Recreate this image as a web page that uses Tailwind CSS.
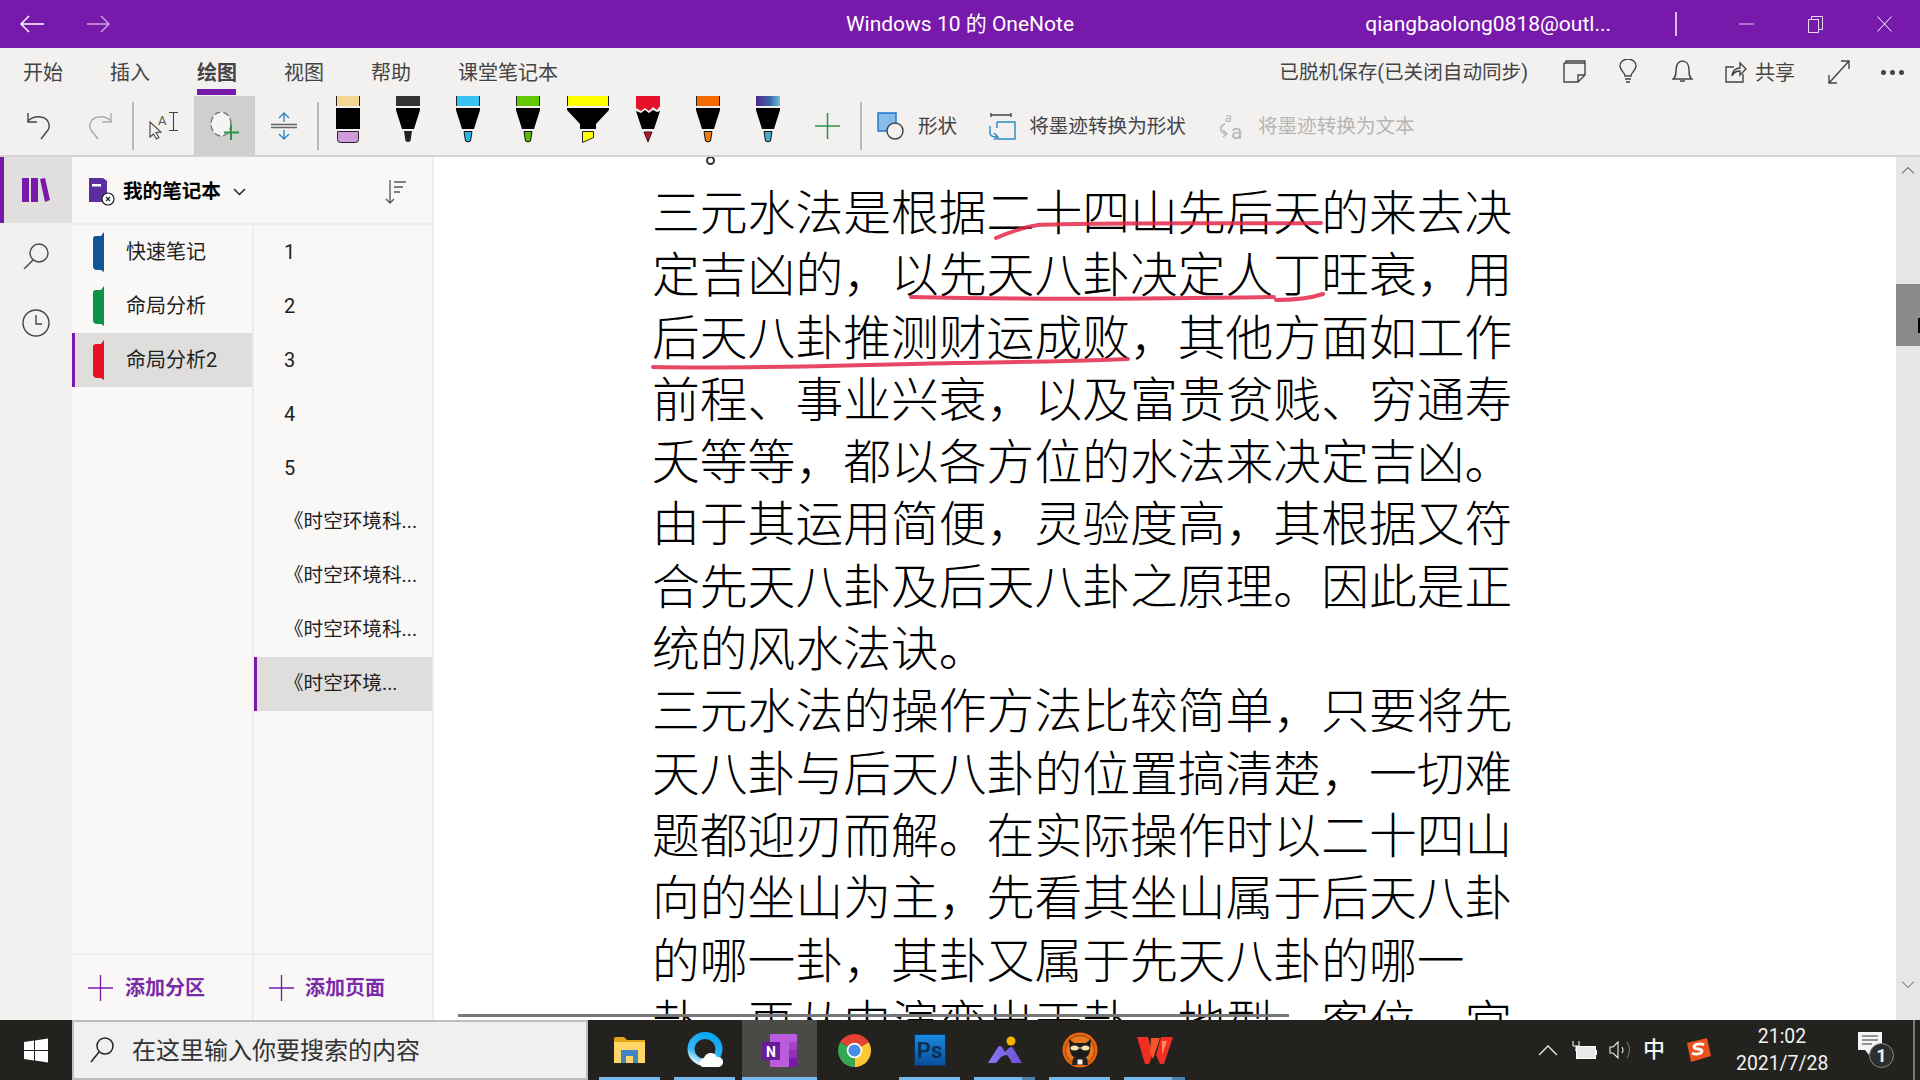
<!DOCTYPE html>
<html lang="zh-CN">
<head>
  <meta charset="UTF-8" />
  <title>Windows 10 的 OneNote</title>
  <script src="https://cdn.jsdelivr.net/npm/@tailwindcss/browser@4"></script>
</head>
<body class="w-[1920px] h-[1080px] overflow-hidden bg-white font-['Roboto','Noto_Sans_CJK_SC',sans-serif] flex flex-col">

  <!-- Title bar -->
  <header class="h-[48px] shrink-0 bg-[#7719aa] text-white grid grid-cols-[1fr_auto_1fr] items-center">
    <div class="flex items-center">
      <svg class="ml-[20px] w-[24px] h-[18px]" viewBox="0 0 24 18" fill="none" stroke="white" stroke-width="1.5"><path d="M24 9H1M9 1L1 9l8 8"/></svg>
      <svg class="ml-[43px] w-[23px] h-[18px] opacity-60" viewBox="0 0 23 18" fill="none" stroke="white" stroke-width="1.5"><path d="M0 9h22M14 1l8 8-8 8"/></svg>
    </div>
    <div class="text-[21px] pt-[1px]">Windows 10 的 OneNote</div>
    <div class="flex items-center justify-end">
      <span class="text-[21px] pt-[1px]">qiangbaolong0818@outl...</span>
      <div class="ml-[64px] w-[2px] h-[24px] bg-white/70"></div>
      <svg class="ml-[62px] w-[15px] h-[2px]" viewBox="0 0 15 2"><path d="M0 1h15" stroke="white" stroke-opacity=".8"/></svg>
      <svg class="ml-[54px] w-[15px] h-[17px]" viewBox="0 0 15 17" fill="none" stroke="white" stroke-opacity=".85"><path d="M.5 3.500h10v13H.5zM3.500 3V.5h11v13H11"/></svg>
      <svg class="ml-[54px] mr-[28px] w-[15px] h-[16px]" viewBox="0 0 15 16" stroke="white" fill="none"><path d="M.5.5l14 15M14.500 .5l-14 15"/></svg>
    </div>
  </header>

  <!-- Ribbon tabs -->
  <nav class="h-[48px] shrink-0 bg-[#f2f1f0] flex items-start text-[#444] text-[20px] pl-[23px] pt-[11px] leading-[28px]">
    <span class="w-[87px]">开始</span>
    <span class="w-[87px]">插入</span>
    <span class="w-[87px] font-bold relative">绘图<span class="absolute left-0 top-[30px] w-[39px] h-[6px] bg-[#7719aa]"></span></span>
    <span class="w-[87px]">视图</span>
    <span class="w-[87px]">帮助</span>
    <span>课堂笔记本</span>
    <span class="ml-auto text-[19.6px]">已脱机保存(已关闭自动同步)</span>
    <svg class="ml-[35px] w-[23px] h-[23px] mt-[1px]" viewBox="0 0 23 23" fill="none" stroke="#444" stroke-width="1.400"><path d="M1 3h21M1 3v19h14l7-7V3M3 3V1h19v2M15 22v-7h7"/></svg>
    <svg class="ml-[33px] w-[18px] h-[24px]" viewBox="0 0 18 24" fill="none" stroke="#444" stroke-width="1.400"><path d="M6 17c0-4-5-5-5-10a8 7 0 0 1 16 0c0 5-5 6-5 10zM6 20h6M7 23h4"/></svg>
    <svg class="ml-[35px] w-[21px] h-[24px]" viewBox="0 0 21 24" fill="none" stroke="#444" stroke-width="1.400"><path d="M1 20c3-2 3-5 3-9 0-6 3-9 6.500-9S17 5 17 11c0 4 0 7 3 9zM8 22h5"/></svg>
    <svg class="ml-[32px] w-[22px] h-[24px]" viewBox="0 0 22 24" fill="none" stroke="#444" stroke-width="1.400"><path d="M9 8H1v15h17v-8M7 17c0-5 4-8 8-8V4l6 6-6 6v-4c-3 0-6 1-8 5z"/></svg>
    <span class="ml-[8px]">共享</span>
    <svg class="ml-[33px] w-[22px] h-[24px] mt-[1px]" viewBox="0 0 22 24" fill="none" stroke="#444" stroke-width="1.400"><path d="M1 23L21 1M13 1h8v8M1 15v8h8"/></svg>
    <span class="ml-[31px] mr-[16px] mt-[11px] flex gap-[4px]"><i class="size-[5px] rounded-full bg-[#444]"></i><i class="size-[5px] rounded-full bg-[#444]"></i><i class="size-[5px] rounded-full bg-[#444]"></i></span>
  </nav>

  <!-- Drawing toolbar -->
  <div class="h-[61px] shrink-0 bg-[#f2f1f0] border-b-[2px] border-[#d4d3d0] flex items-center text-[#444] text-[19.6px]">
    <svg class="ml-[27px] w-[24px] h-[28px]" viewBox="0 0 24 28" fill="none" stroke="#444" stroke-width="1.400"><path d="M1 1v9h9M1 9c3-3 8-5 13-4 7 1 10 8 7 13l-7 9"/></svg>
    <svg class="ml-[37px] w-[24px] h-[28px]" viewBox="0 0 24 28" fill="none" stroke="#aaa" stroke-width="1.400"><path d="M23 1v9h-9M23 9c-3-3-8-5-13-4C3 6 0 13 3 18l7 9"/></svg>
    <div class="ml-[20px] w-[2px] h-[48px] bg-[#b8b8b8]"></div>
    <svg class="ml-[15px] w-[29px] h-[27px] overflow-visible" viewBox="0 0 29 27" fill="none" stroke="#444" stroke-width="1.100"><path d="M1 10v15l3.500-3 3 5 2.500-1.500-3-5 5-.5zM20 .5h9M20 18.500h9M24.500 .5v18"/><text x="9" y="13" font-size="13" fill="#555" stroke="none" font-family="Roboto">A</text></svg>
    <div class="ml-[16px] w-[61px] h-[59px] bg-[#cfcfcf] flex items-center justify-center">
      <svg class="w-[29px] h-[28px]" viewBox="0 0 29 28"><ellipse cx="11" cy="12" rx="10" ry="12" fill="#f5f4f3" stroke="#777" stroke-dasharray="6 3" stroke-width="1.400"/><path d="M21 13v15M14 20.500h15" stroke="#2f9346" stroke-width="2"/></svg>
    </div>
    <svg class="ml-[16px] w-[26px] h-[28px]" viewBox="0 0 26 28" fill="none"><path d="M0 12.500h26M0 15.500h26" stroke="#666" stroke-width="1.400"/><path d="M13 10V1M8 6l5-5 5 5M13 18v9M8 22l5 5 5-5" stroke="#2b88c6" stroke-width="1.400"/></svg>
    <div class="ml-[20px] w-[2px] h-[48px] bg-[#b8b8b8]"></div>

    <!-- Pens -->
    <div class="flex h-full items-start ml-[17px]">
      <svg class="w-[24px] h-[47px]" viewBox="0 0 24 47"><rect width="24" height="10" fill="#f5d690"/><path d="M.5 0v10M23.500 0v10" stroke="#222"/><rect y="12" width="24" height="21" fill="#000"/><path d="M1.500 35.500h21v8q0 3-3 3h-15q-3 0-3-3z" fill="#d09adb" stroke="#222"/></svg>
      <svg class="ml-[36px] w-[24px] h-[47px]" viewBox="0 0 24 47"><rect width="24" height="10" fill="#333"/><path d="M0 12h24v2l-6 19H6L0 14z" fill="#000"/><path d="M8 35h8l-1.500 10q-2.500 2-5 0z" fill="#222"/></svg>
      <svg class="ml-[36px] w-[24px] h-[47px]" viewBox="0 0 24 47"><rect width="24" height="10" fill="#37c4f5"/><path d="M.5 0v10M23.500 0v10" stroke="#222"/><path d="M0 12h24v2l-6 19H6L0 14z" fill="#000"/><path d="M8 35.500h8l-1.500 9.500q-2.500 2-5 0z" fill="#28b6ea" stroke="#111"/></svg>
      <svg class="ml-[36px] w-[24px] h-[47px]" viewBox="0 0 24 47"><rect width="24" height="10" fill="#62c800"/><path d="M.5 0v10M23.500 0v10" stroke="#222"/><path d="M0 12h24v2l-6 19H6L0 14z" fill="#000"/><path d="M8 35.500h8l-1.500 9.500q-2.500 2-5 0z" fill="#62b800" stroke="#111"/></svg>
      <svg class="ml-[27px] w-[42px] h-[47px]" viewBox="0 0 42 47"><rect width="42" height="10" fill="#ffff00"/><path d="M.5 0v10M41.500 0v10" stroke="#222"/><path d="M0 12h42v2L29 28v5H13v-5L0 14z" fill="#000"/><path d="M15.500 35.500h11v6l-11 5z" fill="#ffff00" stroke="#222"/></svg>
      <svg class="ml-[27px] w-[24px] h-[47px]" viewBox="0 0 24 47"><path d="M0 0h24v10l-3 4-4-3-4 4-4-3-4 3-5-3z" fill="#e8102a"/><path d="M0 15l5 2 4-3 4 3 4-3 4 2 3-1-6 18H6z" fill="#000"/><path d="M8 36h8l-4 10z" fill="#c8102a" stroke="#222"/></svg>
      <svg class="ml-[36px] w-[24px] h-[47px]" viewBox="0 0 24 47"><rect width="24" height="10" fill="#f76a00"/><path d="M.5 0v10M23.500 0v10" stroke="#222"/><path d="M0 12h24v2l-6 19H6L0 14z" fill="#000"/><path d="M8 35.500h8l-1.500 9.500q-2.500 2-5 0z" fill="#f07b12" stroke="#111"/></svg>
      <svg class="ml-[36px] w-[24px] h-[47px]" viewBox="0 0 24 47"><defs><linearGradient id="gal" x1="0" x2="1"><stop offset="0" stop-color="#4a2a88"/><stop offset=".6" stop-color="#3c6aa8"/><stop offset="1" stop-color="#6cc4d8"/></linearGradient></defs><rect width="24" height="10" fill="url(#gal)"/><path d="M0 12h24v2l-6 19H6L0 14z" fill="#000"/><path d="M8 35.500h8l-1.500 9.500q-2.500 2-5 0z" fill="#4aa8c0" stroke="#111"/></svg>
    </div>
    <svg class="ml-[35px] w-[25px] h-[26px]" viewBox="0 0 25 26" stroke="#2f9346" stroke-width="1.500"><path d="M12.500 0v26M0 13h25"/></svg>
    <div class="ml-[20px] w-[2px] h-[48px] bg-[#b8b8b8]"></div>
    <svg class="ml-[15px] w-[27px] h-[28px]" viewBox="0 0 27 28"><path d="M1 1h18v18H1z" fill="#86bcec" stroke="#1c74c8" stroke-width="1.400"/><circle cx="18" cy="19" r="8" fill="#f2f1f0" stroke="#444" stroke-width="1.400"/></svg>
    <span class="ml-[14px] pt-[2px]">形状</span>
    <svg class="ml-[31px] w-[28px] h-[28px]" viewBox="0 0 28 28" fill="none" stroke-width="1.400"><path d="M3 5V1M3 3h20M23 1v4" stroke="#444"/><path d="M9 10h18v17H9" stroke="#2b88c6"/><path d="M9 10v6M2 14v7c0 3 3 4 7 4M6 21l4 4-4 3" stroke="#2b88c6"/></svg>
    <span class="ml-[13px] pt-[2px]">将墨迹转换为形状</span>
    <svg class="ml-[33px] w-[27px] h-[28px] overflow-visible" viewBox="0 0 27 28" fill="none" stroke="#b5b5b5" stroke-width="1.400"><path d="M6 12c-6 3-6 8 1 10M4 18l4 4-4 3"/><text x="6" y="10" font-size="13" font-style="italic" fill="#b5b5b5" stroke="none" font-family="Roboto">a</text><text x="12" y="27" font-size="21" fill="#b5b5b5" stroke="none" font-family="Roboto">a</text></svg>
    <span class="ml-[12px] pt-[2px] text-[#b5b5b5]">将墨迹转换为文本</span>
  </div>

  <!-- Main area -->
  <main class="flex-1 min-h-0 flex">
    <!-- Nav rail -->
    <aside class="w-[72px] shrink-0 bg-[#f2f1f0] flex flex-col items-center">
      <div class="w-full h-[66px] bg-[#e0dfdd] border-l-[4px] border-[#7719aa] flex items-center justify-center">
        <svg class="w-[28px] h-[24px] ml-[-4px]" viewBox="0 0 28 24" fill="#7719aa"><rect width="7" height="24"/><rect x="9" width="7" height="24"/><path d="M18 1l5-1 5 22-5 2z"/></svg>
      </div>
      <svg class="mt-[20px] w-[26px] h-[26px]" viewBox="0 0 26 26" fill="none" stroke="#444" stroke-width="1.400"><circle cx="16" cy="10" r="9"/><path d="M10 17L1 26"/></svg>
      <svg class="mt-[40px] w-[28px] h-[28px]" viewBox="0 0 28 28" fill="none" stroke="#444" stroke-width="1.400"><circle cx="14" cy="14" r="13"/><path d="M14 6v9h6"/></svg>
    </aside>

    <!-- Notebook panel -->
    <section class="w-[362px] shrink-0 bg-[#f9f8f7] border-r-[2px] border-[#eeedeb] flex flex-col">
      <div class="h-[68px] shrink-0 border-b-[2px] border-[#eeedeb] flex items-center pt-[3px]">
        <svg class="ml-[17px] w-[26px] h-[28px]" viewBox="0 0 26 28"><path d="M0 0h14l4 3v21H0z" fill="#5b2d9e"/><rect x="3" y="6" width="9" height="2.500" fill="#fff"/><circle cx="19" cy="21" r="6" fill="#fff" stroke="#222" stroke-width="1.200"/><path d="M17 19l4 4M21 19l-4 4" stroke="#222" stroke-width="1.200"/></svg>
        <span class="ml-[8px] text-[19.6px] font-bold text-black">我的笔记本</span>
        <svg class="ml-[12px] w-[13px] h-[8px]" viewBox="0 0 13 8" fill="none" stroke="#222" stroke-width="1.500"><path d="M1 1l5.500 5.500L12 1"/></svg>
        <svg class="ml-auto mr-[25px] w-[22px] h-[24px]" viewBox="0 0 22 24" fill="none" stroke="#555" stroke-width="1.300"><path d="M5 0v23M1 19l4 4 4-4M9 2h12M9 7h9M9 12h6"/></svg>
      </div>
      <div class="flex-1 min-h-0 flex">
        <div class="w-[182px] shrink-0 border-r-[2px] border-[#eeedeb] flex flex-col text-[20px] text-[#222]">
          <div class="h-[54px] flex items-center pl-[20px]">
            <svg class="w-[12px] h-[40px]" viewBox="0 0 12 40"><path d="M12 0v40l-3-2H4q-3-1-3-4V7q0-3 3-3h5z" fill="#0f5597"/></svg>
            <span class="ml-[22px]">快速笔记</span>
          </div>
          <div class="h-[54px] flex items-center pl-[20px]">
            <svg class="w-[12px] h-[40px]" viewBox="0 0 12 40"><path d="M12 0v40l-3-2H4q-3-1-3-4V7q0-3 3-3h5z" fill="#0e9347"/></svg>
            <span class="ml-[22px]">命局分析</span>
          </div>
          <div class="h-[54px] flex items-center pl-[17px] bg-[#dfdedc] border-l-[3px] border-[#7719aa]">
            <svg class="w-[12px] h-[40px]" viewBox="0 0 12 40"><path d="M12 0v40l-3-2H4q-3-1-3-4V7q0-3 3-3h5z" fill="#e81224"/></svg>
            <span class="ml-[22px]">命局分析2</span>
          </div>
          <div class="mt-auto h-[67px] border-t-[2px] border-[#eeedeb] flex items-center pl-[16px]">
            <svg class="w-[25px] h-[26px]" viewBox="0 0 25 26" stroke="#7719aa" stroke-width="1.300"><path d="M12.500 0v26M0 13h25"/></svg>
            <span class="ml-[12px] font-bold text-[#7a2ba8]">添加分区</span>
          </div>
        </div>
        <div class="flex-1 flex flex-col text-[20px] text-[#222]">
          <div class="h-[54px] flex items-center pl-[30px]">1</div>
          <div class="h-[54px] flex items-center pl-[30px]">2</div>
          <div class="h-[54px] flex items-center pl-[30px]">3</div>
          <div class="h-[54px] flex items-center pl-[30px]">4</div>
          <div class="h-[54px] flex items-center pl-[30px]">5</div>
          <div class="h-[54px] flex items-center pl-[30px] text-[19.6px]">《时空环境科...</div>
          <div class="h-[54px] flex items-center pl-[30px] text-[19.6px]">《时空环境科...</div>
          <div class="h-[54px] flex items-center pl-[30px] text-[19.6px]">《时空环境科...</div>
          <div class="h-[54px] flex items-center pl-[27px] text-[19.6px] bg-[#dfdedc] border-l-[3px] border-[#7719aa]">《时空环境...</div>
          <div class="mt-auto h-[67px] border-t-[2px] border-[#eeedeb] flex items-center pl-[15px]">
            <svg class="w-[25px] h-[26px]" viewBox="0 0 25 26" stroke="#7719aa" stroke-width="1.300"><path d="M12.500 0v26M0 13h25"/></svg>
            <span class="ml-[11px] font-bold text-[#7a2ba8]">添加页面</span>
          </div>
        </div>
      </div>
    </section>

    <!-- Page canvas -->
    <div class="flex-1 min-w-0 relative overflow-hidden bg-white">
      <div class="pl-[218px] pt-[22px] w-[1120px] text-[47.8px] leading-[62.3px] text-black font-['Noto_Sans_CJK_SC',sans-serif] font-light">
        <p>三元水法是根据二十四山先后天的来去决</p>
        <p>定吉凶的，以先天八卦决定人丁旺衰，用</p>
        <p>后天八卦推测财运成败，其他方面如工作</p>
        <p>前程、事业兴衰，以及富贵贫贱、穷通寿</p>
        <p>夭等等，都以各方位的水法来决定吉凶。</p>
        <p>由于其运用简便，灵验度高，其根据又符</p>
        <p>合先天八卦及后天八卦之原理。因此是正</p>
        <p>统的风水法诀。</p>
        <p>三元水法的操作方法比较简单，只要将先</p>
        <p>天八卦与后天八卦的位置搞清楚，一切难</p>
        <p>题都迎刃而解。在实际操作时以二十四山</p>
        <p>向的坐山为主，先看其坐山属于后天八卦</p>
        <p>的哪一卦，其卦又属于先天八卦的哪一</p>
        <p>卦，再从中演变出天卦、地型、客位、宫</p>
      </div>
      <div class="absolute left-[272px] top-[-1px] size-[9px] rounded-full border-[2px] border-[#333]"></div>
      <!-- Ink strokes -->
      <svg class="absolute inset-0 w-full h-full pointer-events-none" fill="none" stroke="#e4284a" stroke-opacity=".85" stroke-width="4" stroke-linecap="round">
        <path d="M562 81c14-6 28-11 42-13 60-3 220-1 283-2"/>
        <path d="M477 140c120 3 240 2 363 0M842 143c15 0 35-2 47-6"/>
        <path d="M219 210c100 2 200-2 300-4 60-1 100-1 175-4"/>
      </svg>
      <div class="absolute left-[24px] w-[831px] bottom-[3px] h-[3px] bg-[#777]"></div>
      <!-- Vertical scrollbar -->
      <div class="absolute right-0 top-0 bottom-0 w-[24px] bg-[#e6e6e6]">
        <svg class="absolute top-[10px] left-[6px] w-[12px] h-[7px]" viewBox="0 0 12 7" fill="none" stroke="#333"><path d="M0 6.500l6-6 6 6"/></svg>
        <div class="absolute top-[127px] h-[62px] w-full bg-[#8a8a8a]"></div>
        <div class="absolute top-[161px] right-0 w-[2px] h-[15px] bg-black"></div>
        <svg class="absolute bottom-[32px] left-[6px] w-[12px] h-[7px]" viewBox="0 0 12 7" fill="none" stroke="#555"><path d="M0 .5l6 6 6-6"/></svg>
      </div>
    </div>
  </main>

  <!-- Taskbar -->
  <footer class="h-[60px] shrink-0 bg-[#24221e] flex items-stretch text-white">
    <div class="w-[72px] flex items-center justify-center">
      <svg class="w-[24px] h-[25px]" viewBox="0 0 24 24" fill="white"><path d="M0 3.500l10-1.400v9.300H0zM11 2l13-2v11.400H11zM0 12.500h10v9.400L0 20.500zM11 12.500h13V24l-13-2z"/></svg>
    </div>
    <div class="w-[516px] bg-[#f0f0f0] border-x-[2px] border-y-[2px] border-[#bdbdbd] flex items-center text-[#333] text-[24px]">
      <svg class="ml-[16px] w-[24px] h-[26px]" viewBox="0 0 24 26" fill="none" stroke="#222" stroke-width="1.500"><circle cx="15" cy="9" r="8"/><path d="M9 15L1 25"/></svg>
      <span class="ml-[18px] pt-[2px]">在这里输入你要搜索的内容</span>
    </div>
    <div class="flex ml-[4px]">
      <div class="w-[75px] relative flex items-center justify-center">
        <svg class="w-[31px] h-[26px]" viewBox="0 0 31 26"><path d="M0 2q0-2 2-2h8l3 3h18v6H0z" fill="#e3a61a"/><path d="M0 5h31v21H0z" fill="#ffd566"/><path d="M7 13h17v13h-5v-7h-7v7H7z" fill="#3f86c7"/></svg>
        <span class="absolute bottom-0 left-[7px] w-[61px] h-[3px] bg-[#76b9ed]"></span>
      </div>
      <div class="w-[75px] relative flex items-center justify-center">
        <svg class="w-[36px] h-[36px]" viewBox="0 0 36 36" fill="none"><defs><linearGradient id="qk" x1="0.7" y1="0" x2="0.2" y2="1"><stop offset="0" stop-color="#0aa6f2"/><stop offset=".7" stop-color="#38b8f5"/><stop offset="1" stop-color="#d8f2ff"/></linearGradient></defs><ellipse cx="18" cy="17" rx="14" ry="13.500" stroke="url(#qk)" stroke-width="7"/><path d="M15 35a5 5 0 0 1 2-9 7 7 0 0 1 13-1 5 5 0 0 1 2 10z" fill="#fff"/></svg>
        <span class="absolute bottom-0 left-[7px] w-[61px] h-[3px] bg-[#76b9ed]"></span>
      </div>
      <div class="w-[75px] bg-[#4a4a47] relative flex items-center justify-center">
        <svg class="w-[35px] h-[33px]" viewBox="0 0 35 33"><rect x="8" width="27" height="33" rx="1" fill="#ba5cdc"/><rect x="27" y="8" width="8" height="8" fill="#a544c8"/><rect x="27" y="16" width="8" height="8" fill="#9030b4"/><rect x="27" y="24" width="8" height="9" fill="#7719aa"/><rect y="8" width="18" height="18" rx="1" fill="#6a1b9a"/><text x="4" y="22.500" font-size="14" font-weight="700" fill="#fff" font-family="Roboto">N</text></svg>
        <span class="absolute bottom-0 left-0 w-full h-[3px] bg-[#76b9ed]"></span>
      </div>
      <div class="w-[75px] flex items-center justify-center">
        <svg class="w-[33px] h-[33px]" viewBox="0 0 34 34"><path d="M17 17L2.280 8.500A17 17 0 0 1 31.720 8.500z" fill="#e34133"/><path d="M17 17L31.720 8.500A17 17 0 0 1 17 34z" fill="#fcc934"/><path d="M17 17L17 34A17 17 0 0 1 2.280 8.500z" fill="#34a853"/><circle cx="17" cy="17" r="8" fill="#fff"/><circle cx="17" cy="17" r="6.300" fill="#4a8ee6"/></svg>
      </div>
      <div class="w-[75px] relative flex items-center justify-center">
        <div class="w-[32px] h-[32px] bg-gradient-to-b from-[#1a8ae0] to-[#0a4f9c] border border-[#09345e] text-[#0a2f55] text-[22px] font-semibold flex items-center justify-center">Ps</div>
        <span class="absolute bottom-0 left-[7px] w-[61px] h-[3px] bg-[#76b9ed]"></span>
      </div>
      <div class="w-[75px] relative flex items-center justify-center">
        <svg class="w-[34px] h-[28px]" viewBox="0 0 34 28"><defs><linearGradient id="mt" x1="0" x2="1"><stop offset="0" stop-color="#8a7af0"/><stop offset="1" stop-color="#6a4fd8"/></linearGradient></defs><circle cx="23" cy="5" r="4.500" fill="#f4b400"/><path d="M0 27L10 11q2-2 4 0l3 5 4-4q2-2 4 0l9 15H24q-3-6-5-8-3 0-6 2l-5 6z" fill="url(#mt)"/></svg>
        <span class="absolute bottom-0 left-[7px] w-[61px] h-[3px] bg-[#76b9ed]"></span>
        <span class="absolute bottom-0 left-[55px] w-[13px] h-[3px] bg-[#4f85ad]"></span>
      </div>
      <div class="w-[75px] relative flex items-center justify-center">
        <svg class="w-[36px] h-[36px]" viewBox="0 0 36 36"><circle cx="18" cy="18" r="17.500" fill="#e8650e"/><circle cx="18" cy="18" r="14.500" fill="#e8781e" stroke="#9a3d05"/><path d="M7 7l5 4h12l5-4-1 12q-2 8-10 8T8 19z" fill="#1c1c1c"/><ellipse cx="12.500" cy="16" rx="4" ry="2.500" fill="#f4e2b0"/><ellipse cx="23.500" cy="16" rx="4" ry="2.500" fill="#f4e2b0"/><path d="M16 16h4" stroke="#f4e2b0"/><path d="M11 26h14l1 7H10z" fill="#222"/><rect x="15.500" y="27.500" width="5" height="5" fill="#eee"/></svg>
        <span class="absolute bottom-0 left-[7px] w-[61px] h-[3px] bg-[#76b9ed]"></span>
      </div>
      <div class="w-[75px] relative flex items-center justify-center">
        <svg class="w-[36px] h-[27px]" viewBox="0 0 36 27"><path d="M0 0h11l5 17-4 10H8z" fill="#ef2e24"/><path d="M14 1h9l-7 21-3-6z" fill="#f4552a"/><path d="M24 0h12l-9 27h-4l-4-9z" fill="#ef2e24"/><path d="M25 4h5l-5 14z" fill="#ff8a5c"/></svg>
        <span class="absolute bottom-0 left-[7px] w-[61px] h-[3px] bg-[#76b9ed]"></span>
        <span class="absolute bottom-0 left-[55px] w-[13px] h-[3px] bg-[#4f85ad]"></span>
      </div>
    </div>

    <!-- Tray -->
    <div class="ml-auto flex items-center text-[#f2f2f2]">
      <svg class="w-[18px] h-[11px]" viewBox="0 0 18 11" fill="none" stroke="#eee" stroke-width="1.300"><path d="M0 10l9-9 9 9"/></svg>
      <svg class="ml-[15px] w-[25px] h-[18px]" viewBox="0 0 25 18"><rect x="4.500" y="5.500" width="19" height="12" fill="#e8e8e8" stroke="#fff"/><path d="M1 0v5h6V0M4 5v3q0 2-1 2" stroke="#fff" fill="none"/><rect x="24" y="9" width="1" height="5" fill="#fff"/></svg>
      <svg class="ml-[12px] w-[22px] h-[18px]" viewBox="0 0 22 18" fill="none" stroke="#eee" stroke-width="1.100"><path d="M1 6h3l5-5v16l-5-5H1zM13 6q2 3 0 6"/><path d="M18 1q5 8 0 16" stroke-opacity=".4"/></svg>
      <span class="ml-[12px] w-[22px] text-[22px] font-medium leading-none">中</span>
      <svg class="ml-[21px] w-[25px] h-[24px]" viewBox="0 0 25 24"><path d="M1 5l20-5 4 18-20 6z" fill="#e8531e"/><path d="M18 7c-3-2-10-1-10 2s8 1 8 4-7 4-10 2" fill="none" stroke="#fff" stroke-width="2.800"/></svg>
      <div class="ml-[25px] w-[92px] text-center text-[19.400px] leading-[27px] whitespace-nowrap"><div>21:02</div><div>2021/7/28</div></div>
      <div class="ml-[30px] relative w-[36px] h-[36px] mt-[-1px]">
        <svg class="absolute left-0 top-0 w-[24px] h-[24px]" viewBox="0 0 24 24"><path d="M0 0h24v18H13l-2 5-4-5H0z" fill="#f5f5f5"/><path d="M4 4h16M4 8h16M4 12h10" stroke="#333"/></svg>
        <span class="absolute right-0 bottom-0 size-[25px] rounded-full bg-[#2e2e2e] border border-[#888] text-[18px] font-bold flex items-center justify-center">1</span>
      </div>
      <div class="ml-[19px] mr-[5px] w-[2px] h-full bg-[#777]"></div>
    </div>
  </footer>
</body>
</html>
